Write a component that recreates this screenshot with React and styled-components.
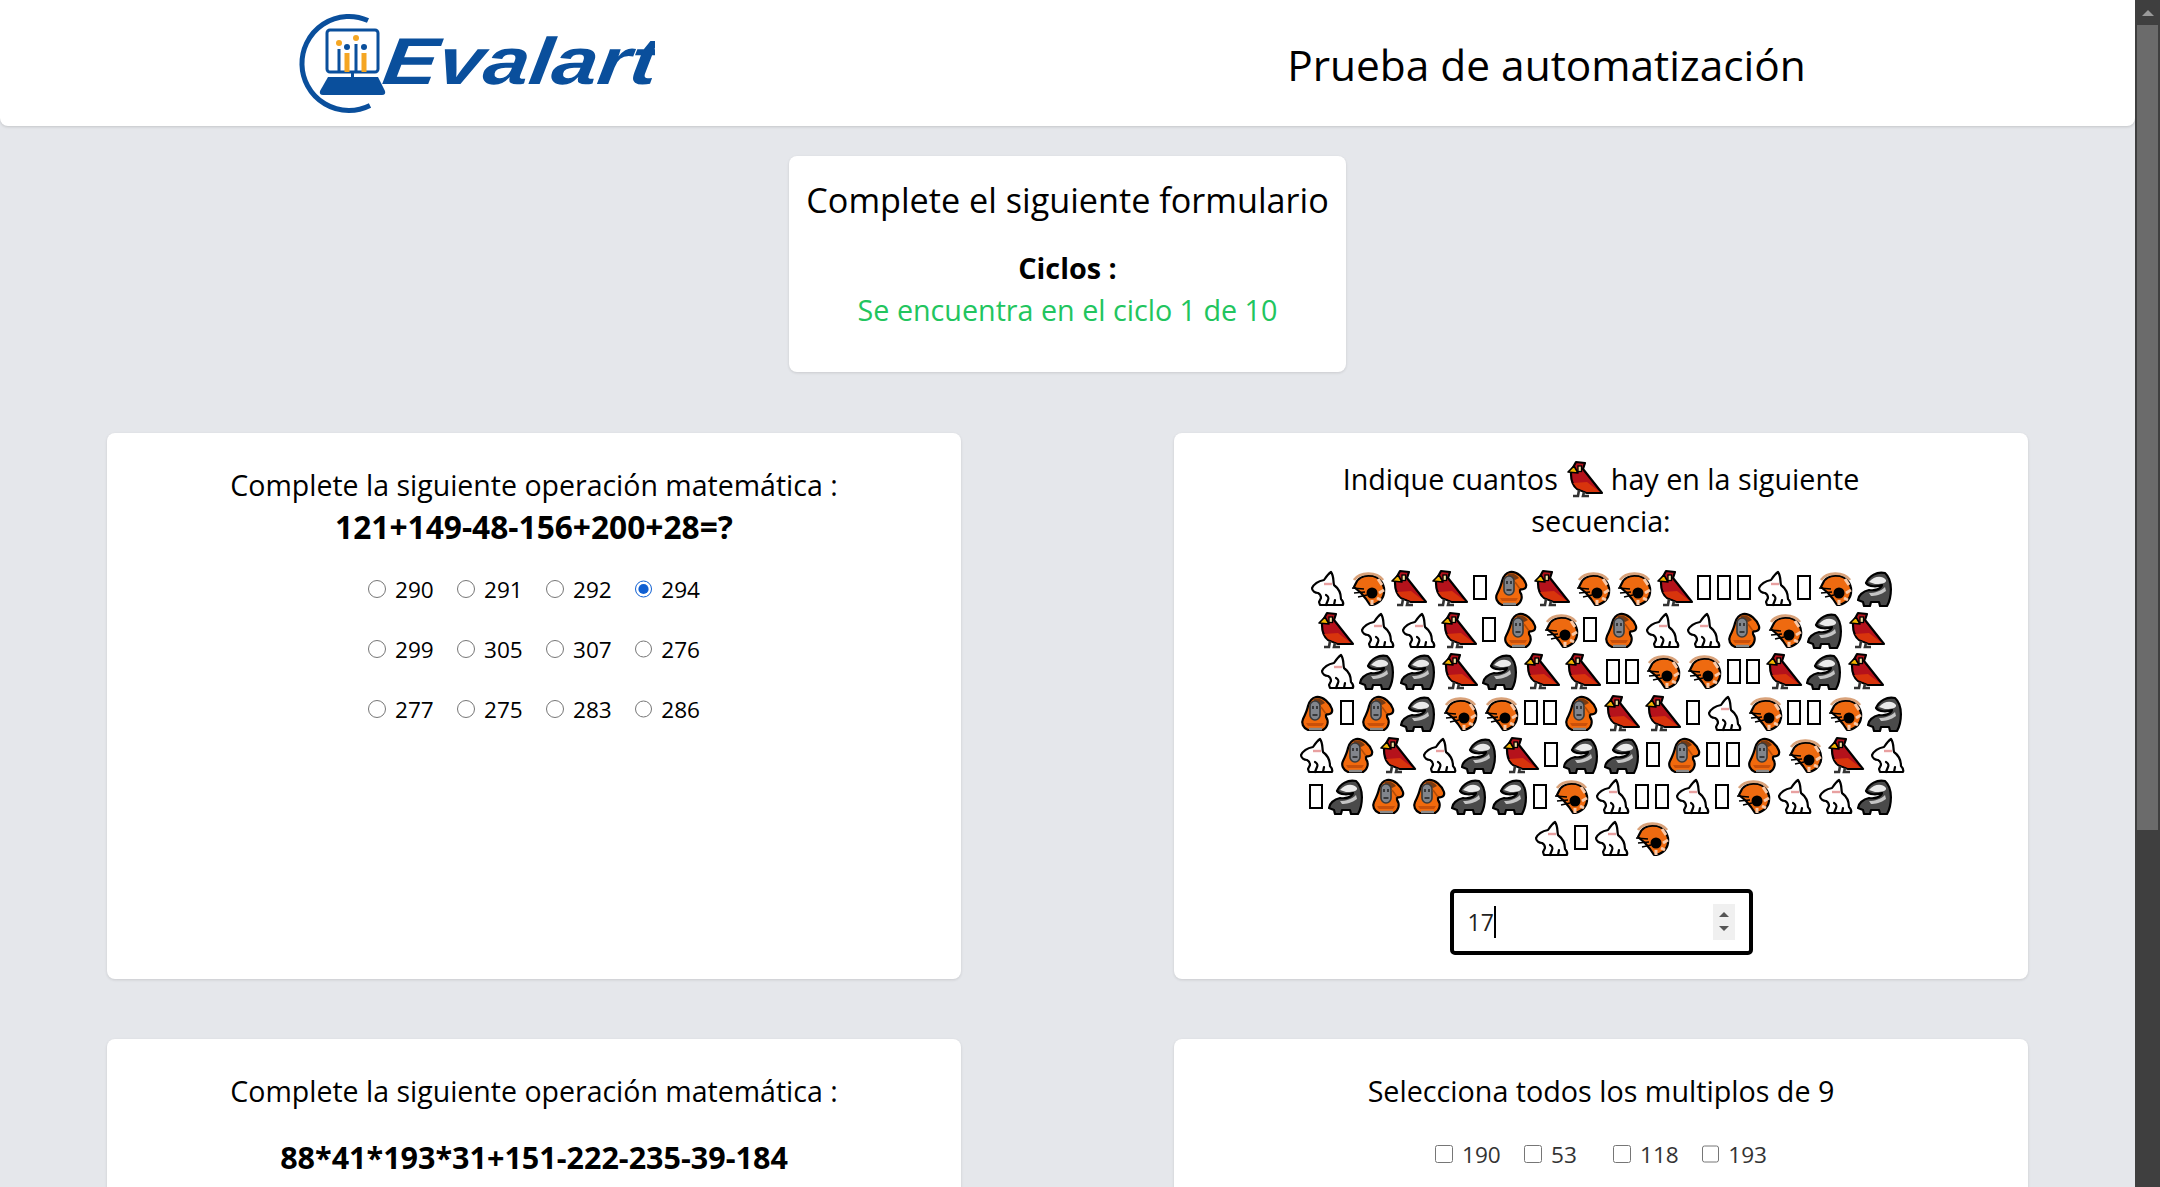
import React from "react";
import styled, { createGlobalStyle } from "styled-components";

const GlobalStyle = createGlobalStyle`
  html, body {
    margin: 0;
    height: 100%;
    overflow: hidden;
    background: #e5e7eb;
    font-family: "Open Sans", "Noto Sans", sans-serif;
    color: #000;
  }
`;

const Shell = styled.div`
  display: flex;
  height: 1187px;
  overflow: hidden;
`;
const Page = styled.div`
  width: 2135px;
  flex: none;
`;
const Scrollbar = styled.div`
  width: 25px;
  flex: none;
  background: #3f3f3f;
  display: flex;
  flex-direction: column;
  align-items: center;
`;
const ScrollArrow = styled.div`
  width: 0;
  height: 0;
  margin: 10px 0 9px;
  border-left: 6px solid transparent;
  border-right: 6px solid transparent;
  border-bottom: 6px solid #9a9a9a;
`;
const ScrollThumb = styled.div`
  width: 21px;
  height: 805px;
  background: #6b6b6b;
`;

const Header = styled.header`
  height: 126px;
  background: #fff;
  border-radius: 0 0 8px 8px;
  box-shadow: 0 1px 3px rgba(0, 0, 0, 0.15);
  display: grid;
  grid-template-columns: 954px 1fr;
  align-items: center;
`;
const LogoSlot = styled.div`
  display: flex;
  justify-content: center;
`;
const PageTitle = styled.h1`
  margin: 2px 0 0 4px;
  font-size: 42.4px;
  font-weight: 400;
  text-align: center;
`;

const Main = styled.main`
  padding: 30px 107px 0;
`;
const SummaryCard = styled.section`
  width: 557px;
  height: 216px;
  box-sizing: border-box;
  margin: 0 auto 61px;
  padding: 20px 0 0;
  background: #fff;
  border-radius: 8px;
  box-shadow: 0 1px 3px rgba(0, 0, 0, 0.12);
  text-align: center;
`;
const SummaryTitle = styled.h2`
  margin: 0 0 23px;
  font-size: 34.2px;
  line-height: 48px;
  font-weight: 400;
  white-space: nowrap;
`;
const CycleLabel = styled.div`
  font-size: 28.8px;
  line-height: 42px;
  font-weight: 700;
`;
const CycleValue = styled.div`
  font-size: 28.7px;
  line-height: 42px;
  color: #22c55e;
`;

const Grid = styled.div`
  display: grid;
  grid-template-columns: 854px 854px;
  column-gap: 213px;
  row-gap: 60px;
`;
const Card = styled.section`
  height: ${(p) => p.$height}px;
  box-sizing: border-box;
  padding: ${(p) => p.$top}px 40px 0;
  background: #fff;
  border-radius: 8px;
  box-shadow: 0 1px 3px rgba(0, 0, 0, 0.12);
  display: flex;
  flex-direction: column;
  align-items: center;
  text-align: center;
`;
const Question = styled.p`
  margin: 0;
  font-size: ${(p) => p.$size || 28.5}px;
  line-height: 42px;
  max-width: ${(p) => p.$maxWidth || 774}px;
`;
const Formula = styled.p`
  margin: ${(p) => p.$top || 0}px 0 0;
  font-size: ${(p) => p.$size}px;
  line-height: 42px;
  font-weight: 700;
`;
const OptionGrid = styled.div`
  display: grid;
  grid-template-columns: 89px 89px 89px 65px;
  row-gap: 24px;
  margin-top: ${(p) => p.$top}px;
  color: ${(p) => p.$color};
`;
const Option = styled.label`
  display: flex;
  align-items: center;
  height: 36px;
  gap: 9px;
  font-size: 22.6px;
  line-height: 36px;
`;
const OptionInput = styled.input`
  width: 18px;
  height: 18px;
  margin: 0 0 3px;
  accent-color: #0f5fd2;
`;

const InlineBird = styled.span`
  display: inline-block;
  width: 41px;
  height: 38px;
  vertical-align: -8px;
  margin: 0 6px;
`;
const Sequence = styled.div`
  margin-top: 25px;
  display: flex;
  flex-direction: column;
  align-items: center;
`;
const SequenceRow = styled.div`
  display: flex;
  height: 41.7px;
  align-items: center;
`;
const Emoji = styled.svg`
  width: 41px;
  height: 38px;
  flex: none;
`;
const Tofu = styled.span`
  width: 14px;
  height: 25px;
  margin: 0 2.8px;
  flex: none;
  box-sizing: border-box;
  border: 2px solid #000;
`;

const NumberField = styled.div`
  width: 303px;
  height: 66px;
  box-sizing: border-box;
  margin-top: 30px;
  padding: 0 14px;
  border: 4px solid #000;
  border-radius: 5px;
  display: flex;
  align-items: center;
  font-size: 23px;
`;
const FieldValue = styled.span`
  line-height: 32px;
  color: #222;
  border-right: 2px solid #000;
  flex: none;
`;
const Spinner = styled.div`
  width: 22px;
  height: 36px;
  margin-left: auto;
  background: #f0f0f0;
  display: flex;
  flex-direction: column;
  align-items: center;
  justify-content: center;
  gap: 9px;
`;
const SpinUp = styled.i`
  width: 0;
  height: 0;
  border-left: 5px solid transparent;
  border-right: 5px solid transparent;
  border-bottom: 5px solid #555;
`;
const SpinDown = styled.i`
  width: 0;
  height: 0;
  border-left: 5px solid transparent;
  border-right: 5px solid transparent;
  border-top: 5px solid #555;
`;

const Logo = () => (
  <svg width="356" height="104" viewBox="0 0 356 104">
    <path d="M69 9.5A47 47 0 1 0 71 94.5" fill="none" stroke="#0a4f9c" strokeWidth="5" />
    <rect x="28" y="19" width="51" height="42" rx="3" fill="#fff" stroke="#0a4f9c" strokeWidth="3" />
    <rect x="38.5" y="38" width="3" height="23" fill="#0a4f9c" />
    <rect x="45.5" y="42" width="5" height="19" fill="#f5a623" />
    <rect x="55.5" y="33" width="3" height="28" fill="#0a4f9c" />
    <rect x="62.5" y="42" width="5" height="19" fill="#f5a623" />
    <circle cx="40" cy="32" r="3" fill="#f5a623" />
    <circle cx="48" cy="36" r="3" fill="#0a4f9c" />
    <circle cx="57" cy="27" r="3" fill="#f5a623" />
    <circle cx="65" cy="36" r="3" fill="#0a4f9c" />
    <path d="M29 66H79L86 80Q87 84 83 84H24Q20 84 21 80Z" fill="#0a4f9c" />
    <rect x="52" y="61" width="3" height="6" fill="#0a4f9c" />
    <text x="92" y="73" transform="skewX(-8)" fontFamily="Liberation Sans, sans-serif" fontStyle="italic" fontWeight="700" fontSize="66" fill="#0a4f9c" textLength="274" lengthAdjust="spacingAndGlyphs">Evalart</text>
  </svg>
);

const stroke = { stroke: "#000", strokeWidth: 2.2, strokeLinejoin: "round", strokeLinecap: "round" };

const Rabbit = () => (
  <Emoji viewBox="0 0 41 38">
    <path d="M25 3C22 5 20 8 18 11C13 12 8 15 6 19C6 22 9 24 12 24C14 25 15 27 15 29L13 33L14 36H37C38 33 36 31 35 30C35 24 32 19 28 16C27 12 28 7 25 3Z" fill="#fff" {...stroke} />
    <path d="M18 15L26 15" stroke="#e8a0a0" strokeWidth="2.4" fill="none" />
    <path d="M20 36L22 31C23 29 22 27 20 26M28 36L29 31" fill="none" {...stroke} />
  </Emoji>
);
const Shrimp = () => (
  <Emoji viewBox="0 0 41 38">
    <path d="M9 14C12 7 20 6 26 7C35 9 38 18 37 24C36 31 30 36 23 36L19 30L14 24L7 18Z" fill="#ee6a10" {...stroke} />
    <path d="M7 11C13 3 29 2 36 11" fill="none" stroke="#d9a27a" strokeWidth="2.8" />
    <circle cx="25" cy="24" r="5.5" fill="#000" />
    <path d="M31 10L35 16M37 21L32 24M34 31L30 29M25 36L25 31" stroke="#f9c9a8" strokeWidth="3" fill="none" />
    <path d="M5 19L17 20M7 24L18 23M11 28L20 26" stroke="#000" strokeWidth="1.6" fill="none" />
  </Emoji>
);
const Cardinal = () => (
  <Emoji viewBox="0 0 41 38">
    <path d="M7 11L12 2L21 3L19 9L38 33H23L13 29C8 25 7 19 7 14Z" fill="#b5121b" {...stroke} />
    <path d="M9 23L23 22L36 32H23L13 28Z" fill="#d8340c" />
    <path d="M4 12L10 6L14 13Z" fill="#f4b400" stroke="#000" strokeWidth="1.6" strokeLinejoin="round" />
    <rect x="14" y="6" width="3.5" height="5.5" fill="#f4dfa0" stroke="#000" strokeWidth="1.3" />
    <path d="M15 30L14 36H9M20 32L19 36H25" fill="none" stroke="#333" strokeWidth="2.6" />
  </Emoji>
);
const Orangutan = () => (
  <Emoji viewBox="0 0 41 38">
    <path d="M20 3C27 2 34 9 36 15C37 19 34 21 30 20L30 23C33 27 32 33 27 36H12C7 34 5 29 7 25C9 21 11 17 12 12C13 8 16 4 20 3Z" fill="#f26a0d" {...stroke} />
    <path d="M17 5C21 3 26 5 29 9L25 11L19 8Z" fill="#7a3a10" />
    <rect x="14" y="7" width="10" height="19" rx="5" fill="#81858c" stroke="#3a3a3a" strokeWidth="1.6" />
    <path d="M17 12V15M21 12V15M16.5 21H21.5" stroke="#222" strokeWidth="1.5" fill="none" />
    <path d="M25 13L30 20" stroke="#b34c08" strokeWidth="1.6" fill="none" />
    <path d="M10 29H28L26 32H12Z" fill="#c9500a" />
    <path d="M13 35H26" stroke="#8a8a8a" strokeWidth="2.5" />
  </Emoji>
);
const Skunk = () => (
  <Emoji viewBox="0 0 41 38">
    <path d="M30 4C22 2 14 7 11 14C14 18 22 18 27 16C26 20 20 22 14 21C8 22 3 27 3 31L8 33L9 37H15L16 33H24L25 37H32C37 28 38 11 30 4Z" fill="#4a4a4a" {...stroke} />
    <path d="M14 13C19 7 27 6 31 11C32 15 24 15 20 15Z" fill="#eaeaea" />
    <path d="M14 24C20 24 26 22 30 18L31 22C26 26 20 27 16 27Z" fill="#c4c4c4" />
  </Emoji>
);

const glyphs = { R: Rabbit, S: Shrimp, C: Cardinal, O: Orangutan, K: Skunk };

const rows = [
  "RSCCTOCSSCTTTRTSK",
  "CRRCTOSTORROSKC",
  "RKKCKCCTTSSTTCKC",
  "OTOKSSTTOCCTRSTTSK",
  "ROCRKCTKKTOTTOSCR",
  "TKOOKKTSRTTRTSRRK",
  "RTRS",
];

const radios = [290, 291, 292, 294, 299, 305, 307, 276, 277, 275, 283, 286];
const checks = [190, 53, 118, 193];

const App = () => (
  <Shell>
    <GlobalStyle />
    <Page>
      <Header>
        <LogoSlot>
          <Logo />
        </LogoSlot>
        <PageTitle>Prueba de automatización</PageTitle>
      </Header>
      <Main>
        <SummaryCard>
          <SummaryTitle>Complete el siguiente formulario</SummaryTitle>
          <CycleLabel>Ciclos :</CycleLabel>
          <CycleValue>Se encuentra en el ciclo 1 de 10</CycleValue>
        </SummaryCard>
        <Grid>
          <Card $height={546} $top={31}>
            <Question>Complete la siguiente operación matemática :</Question>
            <Formula $size={31.7}>121+149-48-156+200+28=?</Formula>
            <OptionGrid $top={24} $color="#000">
              {radios.map((n) => (
                <Option key={n}>
                  <OptionInput type="radio" name="math" defaultChecked={n === 294} />
                  {n}
                </Option>
              ))}
            </OptionGrid>
          </Card>
          <Card $height={546} $top={25}>
            <Question $maxWidth={560} $size={28.7}>
              Indique cuantos
              <InlineBird>
                <Cardinal />
              </InlineBird>
              hay en la siguiente secuencia:
            </Question>
            <Sequence>
              {rows.map((row, i) => (
                <SequenceRow key={i}>
                  {row.split("").map((c, j) => {
                    const Glyph = glyphs[c];
                    return Glyph ? <Glyph key={j} /> : <Tofu key={j} />;
                  })}
                </SequenceRow>
              ))}
            </Sequence>
            <NumberField>
              <FieldValue>17</FieldValue>
              <Spinner>
                <SpinUp />
                <SpinDown />
              </Spinner>
            </NumberField>
          </Card>
          <Card $height={500} $top={31}>
            <Question>Complete la siguiente operación matemática :</Question>
            <Formula $top={24} $size={30.5}>88*41*193*31+151-222-235-39-184</Formula>
          </Card>
          <Card $height={500} $top={31}>
            <Question $size={28.7}>Selecciona todos los multiplos de 9</Question>
            <OptionGrid $top={25} $color="#333">
              {checks.map((n) => (
                <Option key={n}>
                  <OptionInput type="checkbox" />
                  {n}
                </Option>
              ))}
            </OptionGrid>
          </Card>
        </Grid>
      </Main>
    </Page>
    <Scrollbar>
      <ScrollArrow />
      <ScrollThumb />
    </Scrollbar>
  </Shell>
);

export default App;
